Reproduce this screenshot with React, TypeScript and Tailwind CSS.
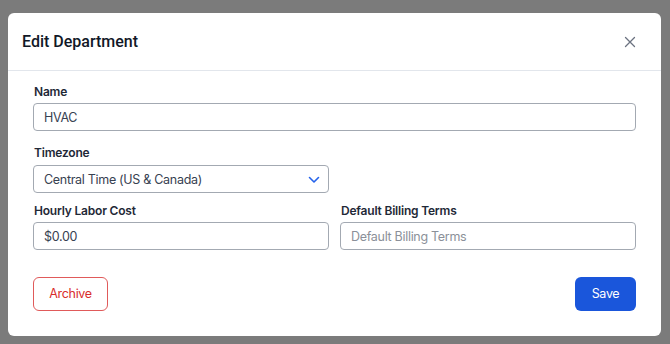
import React from "react";

export default function App() {
  const label = "text-[12px] font-semibold text-[#1f2937] leading-[16px] tracking-[-0.2px]";
  const input = "h-[28px] border border-[#a3a9b2] rounded-[4px] flex items-center px-[10px] pt-[2px] text-[12.5px] tracking-[-0.3px]";
  return (
    <div className="w-[670px] h-[344px] bg-[#7b7b7b] pt-[13px] pl-[8px]" style={{ fontFamily: "Inter, sans-serif" }}>
      <div className="w-[653px] h-[323px] bg-white rounded-[6px] flex flex-col">
        <div className="h-[58px] shrink-0 flex items-center justify-between pl-[14px] pr-[25px] border-b border-[#e2e6ec]">
          <h2 className="text-[16px] font-medium text-[#111827]" style={{ fontFamily: "Roboto, sans-serif" }}>Edit Department</h2>
          <svg width="12" height="12" viewBox="0 0 12 12" className="text-[#6b7280]">
            <path d="M1.5 1.5 L10.5 10.5 M10.5 1.5 L1.5 10.5" stroke="currentColor" strokeWidth="1.3" strokeLinecap="round" />
          </svg>
        </div>
        <div className="px-[25px] pt-[13px] flex flex-col">
          <label className={`${label} mb-[3px] pl-[1px]`}>Name</label>
          <div className={`${input} text-[#374151]`}>HVAC</div>
          <label className={`${label} mt-[14px] mb-[4px] pl-[1px]`}>Timezone</label>
          <div className={`${input} w-[296px] justify-between pr-[8px] text-[#374151]`}>
            <span>Central Time (US &amp; Canada)</span>
            <svg width="12" height="8" viewBox="0 0 12 8">
              <path d="M1.5 1.5 L6 6 L10.5 1.5" stroke="#2563eb" strokeWidth="1.6" fill="none" strokeLinecap="round" strokeLinejoin="round" />
            </svg>
          </div>
          <div className="grid grid-cols-2 gap-x-[11px] mt-[10px]">
            <div className="flex flex-col">
              <label className={`${label} mb-[3px] pl-[1px]`}>Hourly Labor Cost</label>
              <div className={`${input} text-[#374151]`}>$0.00</div>
            </div>
            <div className="flex flex-col">
              <label className={`${label} mb-[3px] pl-[1px]`}>Default Billing Terms</label>
              <div className={`${input} text-[#8b9099]`}>Default Billing Terms</div>
            </div>
          </div>
          <div className="flex justify-between mt-[27px]">
            <button className="w-[75px] h-[34px] border border-[#e05a5a] rounded-[6px] text-[12.5px] tracking-[-0.3px] text-[#d92d2d]">Archive</button>
            <button className="w-[61px] h-[34px] bg-[#1a56db] rounded-[6px] text-[12.5px] tracking-[-0.3px] text-white">Save</button>
          </div>
        </div>
      </div>
    </div>
  );
}
